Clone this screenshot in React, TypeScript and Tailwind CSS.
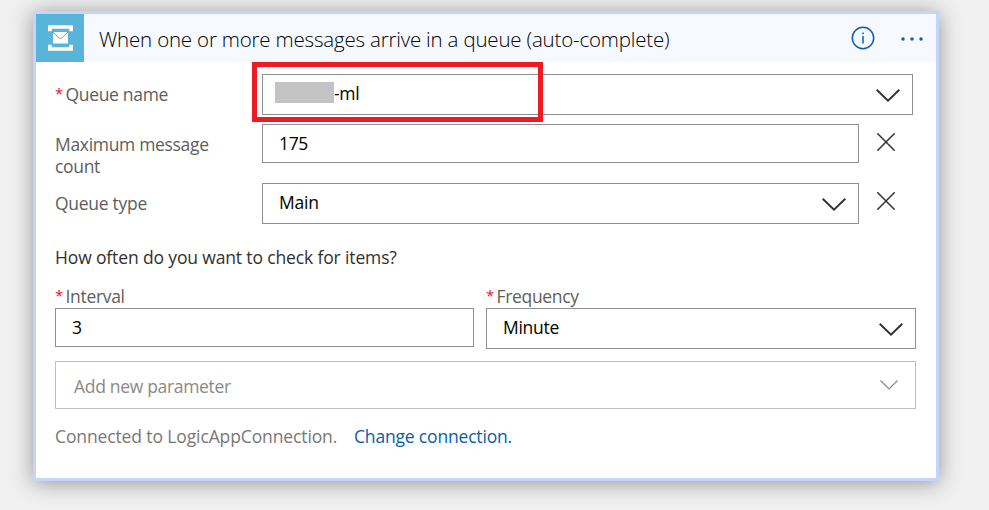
import type { ReactNode } from "react";

function Chevron({ small = false }: { small?: boolean }) {
  return small ? (
    <svg width="18" height="10" viewBox="0 0 18 10" fill="none" stroke="#8a8886" strokeWidth="1.2">
      <path d="M0.5 0.5 9 9 17.5 0.5" />
    </svg>
  ) : (
    <svg className="relative top-px" width="24" height="13" viewBox="0 0 24 13" fill="none" stroke="#323130" strokeWidth="1.9">
      <path d="M0.7 0.7 12 11.6 23.3 0.7" />
    </svg>
  );
}

function Cross() {
  return (
    <svg width="18" height="18" viewBox="0 0 18 18" fill="none" stroke="#323130" strokeWidth="1.5">
      <path d="M0.3 0.3 17.7 17.7M17.7 0.3 0.3 17.7" />
    </svg>
  );
}

function Required({ children }: { children: ReactNode }) {
  return (
    <span className="flex whitespace-nowrap">
      <span className="w-[10.5px] text-[15px] leading-[20px] text-[#e81123]">*</span>
      {children}
    </span>
  );
}

export default function App() {
  return (
    <div className="flex h-[510px] w-[989px] items-start overflow-hidden bg-[#f0f0f0] pt-[11px] pl-[33px] font-['Open_Sans','Noto_Sans',sans-serif] text-[17.5px] leading-[22px] tracking-[-0.32px] text-[#605e5c]">
      <main className="h-[470px] w-[906px] border-[3px] border-[#c3d5fd] bg-white shadow-[0_2px_20px_rgba(0,0,0,0.38)]">
        <header className="flex h-12 items-center bg-[#f6f9ff] text-black">
          <div className="flex size-12 items-center justify-center bg-[#59b4d9]">
            <svg width="48" height="48" viewBox="0 0 48 48" fill="none">
              <path d="M12 11.2h25v6h-3.7v-2.4H15.7v2.4H12zM12 36.8h25v-6h-3.7v2.4H15.7v-2.4H12z" fill="#fff" />
              <path d="M17 18h15v11.5H17z" fill="#fff" />
              <path d="m17 18 5.8 5.8q1.7 1.4 3.4 0L32 18" stroke="#59b4d9" strokeWidth="1" />
            </svg>
          </div>
          <h1 className="mt-px ml-[15px] flex-1 whitespace-nowrap text-[20.5px] font-light leading-7 tracking-[-0.19px]">
            When one or more messages arrive in a queue (auto-complete)
          </h1>
          <svg className="mr-[26px]" width="24" height="24" viewBox="0 0 24 24" fill="none" stroke="#0a5cb8" strokeWidth="1.5">
            <circle cx="12" cy="12" r="10.7" />
            <path d="M12 10v7.5M12 6.6v1.6" />
          </svg>
          <svg className="mt-[2px] mr-[13px]" width="22" height="4" viewBox="0 0 22 4" fill="#0a5cb8">
            <circle cx="2" cy="2" r="1.7" />
            <circle cx="11" cy="2" r="1.7" />
            <circle cx="20" cy="2" r="1.7" />
          </svg>
        </header>

        <section className="pt-3 pl-[19px]">
          <div className="flex">
            <label className="w-[207px] pt-[9px]">
              <Required>Queue name</Required>
            </label>
            <div className="relative flex h-[41px] w-[651px] items-center border border-[#8f8f8f] pr-3 pl-3 text-black">
              <div className="absolute -top-[13px] -left-[11px] h-[60px] w-[291px] border-5 border-[#ed1c24]" />
              <span className="mb-1 h-[21px] w-[59px] bg-[#c3c3c3]" />
              <span className="mb-[3px] flex-1">-ml</span>
              <Chevron />
            </div>
          </div>

          <div className="mt-[9px] flex h-[59px]">
            <label className="w-[207px] pt-[9px] pr-8">Maximum message count</label>
            <div className="flex h-[39px] w-[597px] items-center border border-[#8f8f8f] pb-[2px] pl-4 text-black">175</div>
            <button className="mt-[9px] ml-[18px] h-[18px]">
              <Cross />
            </button>
          </div>

          <div className="flex h-[41px]">
            <label className="w-[207px] pt-[9px] tracking-[-0.28px]">Queue type</label>
            <div className="flex w-[597px] items-center border border-[#8f8f8f] pr-3 pl-4 text-black">
              <span className="mb-[3px] flex-1 tracking-[-0.2px]">Main</span>
              <Chevron />
            </div>
            <button className="mt-[9px] ml-[18px] h-[18px]">
              <Cross />
            </button>
          </div>

          <p className="mt-[22px] whitespace-nowrap tracking-[-0.14px] text-[#323130]">How often do you want to check for items?</p>

          <div className="mt-[17px] flex gap-3">
            <div className="w-[419px]">
              <label>
                <Required>Interval</Required>
              </label>
              <div className="mt-px flex h-[39px] items-center border border-[#8f8f8f] pb-[2px] pl-4 text-black">3</div>
            </div>
            <div className="w-[430px]">
              <label>
                <Required>Frequency</Required>
              </label>
              <div className="mt-px flex h-[41px] items-center border border-[#8f8f8f] pr-3 pl-4 text-black">
                <span className="mb-[3px] flex-1 tracking-[-0.28px]">Minute</span>
                <Chevron />
              </div>
            </div>
          </div>

          <div className="mt-3 flex h-12 w-[861px] items-center border border-[#c0c0c0] pr-[17px] pl-[18px] text-[#8a8886]">
            <span className="mt-px flex-1">Add new parameter</span>
            <Chevron small />
          </div>

          <div className="mt-4 flex whitespace-nowrap text-[#797775]">
            <span className="w-[299px] tracking-[-0.12px]">Connected to LogicAppConnection.</span>
            <a className="tracking-[-0.18px] text-[#0a5cab]">Change connection.</a>
          </div>
        </section>
      </main>
    </div>
  );
}
